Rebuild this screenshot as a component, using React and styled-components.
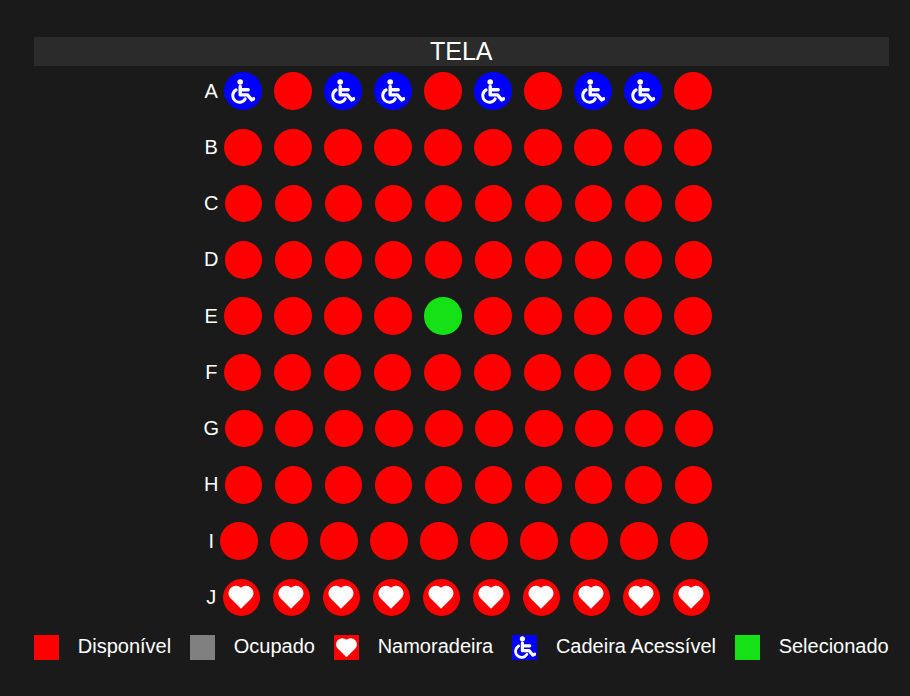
import { BiSolidHeart } from "react-icons/bi";
import styled, { createGlobalStyle } from "styled-components";

const GlobalStyle = createGlobalStyle`
  html, body {
    margin: 0;
    background: #1a1a1a;
    color: #fff;
    font-family: "Liberation Sans", Arial, sans-serif;
  }
`;

const Page = styled.div`
  box-sizing: border-box;
  width: 910px;
  height: 696px;
  padding: 37px 21.25px 0 33.75px;
  overflow: hidden;
`;

const Screen = styled.div`
  margin-bottom: 6.25px;
  background: #2b2b2b;
  font-size: 25px;
  text-align: center;
`;

const Rows = styled.div`
  display: flex;
  flex-direction: column;
  gap: 18.75px;
`;

const Row = styled.div`
  display: flex;
  justify-content: center;
  align-items: center;
`;

const RowLabel = styled.span`
  font-size: 20px;
`;

const SEAT_COLORS = {
  available: "#ff0000",
  occupied: "#808080",
  love: "#ff0000",
  accessible: "#0000ff",
  selected: "#16e016",
};

const Seat = styled.div`
  display: flex;
  align-items: center;
  justify-content: center;
  width: 37.5px;
  height: 37.5px;
  margin: 0 6.25px;
  border-radius: 50%;
  background: ${({ $kind }) => SEAT_COLORS[$kind]};
  color: #fff;
  font-size: 30px;
`;

const Legend = styled.div`
  display: flex;
  justify-content: space-between;
  align-items: center;
  margin-top: 18.75px;
`;

const LegendItem = styled.div`
  display: flex;
  align-items: center;
  gap: 19px;
  font-size: 20px;
`;

const LegendLabel = styled.span`
  padding-bottom: 2px;
`;

const Swatch = styled.div`
  display: flex;
  align-items: center;
  justify-content: center;
  width: 25px;
  height: 25px;
  background: ${({ $kind }) => SEAT_COLORS[$kind]};
  color: #fff;
  font-size: 25px;
`;

const ChairSvg = styled.svg`
  flex-shrink: 0;
  width: ${({ $size }) => $size}px;
  height: ${({ $size }) => $size}px;
`;

function WheelchairIcon({ size }) {
  return (
    <ChairSvg $size={size} viewBox="6.5 6.5 25 25">
      <circle cx="16.7" cy="9.5" r="2.8" fill="#fff" />
      <path
        d="M16.7 14v8.4h7.3l4.2 5 2-1.2M16.7 17.2h8"
        fill="none"
        stroke="#fff"
        strokeWidth="3.4"
        strokeLinecap="round"
        strokeLinejoin="round"
      />
      <path
        d="M12.6 17.4a6.6 6.6 0 1 0 9 9"
        fill="none"
        stroke="#fff"
        strokeWidth="3"
        strokeLinecap="round"
      />
    </ChairSvg>
  );
}

const ROWS = ["A", "B", "C", "D", "E", "F", "G", "H", "I", "J"];
const ACCESSIBLE_A = [0, 2, 3, 5, 7, 8];

const LEGEND = [
  { kind: "available", label: "Disponível" },
  { kind: "occupied", label: "Ocupado" },
  { kind: "love", label: "Namoradeira" },
  { kind: "accessible", label: "Cadeira Acessível" },
  { kind: "selected", label: "Selecionado" },
];

function seatKind(row, index) {
  if (row === "A" && ACCESSIBLE_A.includes(index)) return "accessible";
  if (row === "E" && index === 4) return "selected";
  if (row === "J") return "love";
  return "available";
}

function SeatIcon({ kind, size }) {
  if (kind === "accessible") return <WheelchairIcon size={size} />;
  if (kind === "love") return <BiSolidHeart />;
  return null;
}

export default function App() {
  return (
    <Page>
      <GlobalStyle />
      <Screen>TELA</Screen>
      <Rows>
        {ROWS.map((row) => (
          <Row key={row}>
            <RowLabel>{row}</RowLabel>
            {Array.from({ length: 10 }, (_, i) => {
              const kind = seatKind(row, i);
              return (
                <Seat key={i} $kind={kind}>
                  <SeatIcon kind={kind} size={25} />
                </Seat>
              );
            })}
          </Row>
        ))}
      </Rows>
      <Legend>
        {LEGEND.map(({ kind, label }) => (
          <LegendItem key={kind}>
            <Swatch $kind={kind}>
              <SeatIcon kind={kind} size={23} />
            </Swatch>
            <LegendLabel>{label}</LegendLabel>
          </LegendItem>
        ))}
      </Legend>
    </Page>
  );
}
